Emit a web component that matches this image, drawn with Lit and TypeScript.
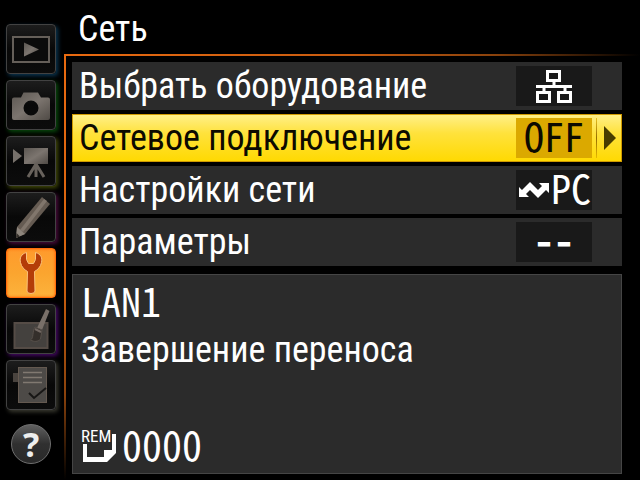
import { LitElement, html, css, svg, nothing } from "lit";
import { customElement, property, state } from "lit/decorators.js";
import { classMap } from "lit/directives/class-map.js";

const tabIcons: Record<string, unknown> = {
  play: svg`
    <rect x="7" y="13" width="36" height="25" fill="#0b0b0b" stroke="#655f59" stroke-width="2"/>
    <path d="M18 18.500L33 25.500L18 32.500Z" fill="url(#metal)"/>`,
  camera: svg`
    <path fill-rule="evenodd" fill="url(#metal)" d="M8 17.500H15L17.500 12.500H32L35 17.500H42Q44 17.500 44 19.500V38Q44 40 42 40H8Q6 40 6 38V19.500Q6 17.500 8 17.500ZM25 20.500A7.500 7.500 0 1 0 25 35.500A7.500 7.500 0 1 0 25 20.500Z"/>`,
  movie: svg`
    <path d="M7 13L16 20L7 27Z" fill="#77716b"/>
    <rect x="18" y="12" width="24" height="16" fill="url(#metal)"/>
    <path d="M30 28L22 41M30 28V41M30 28L38 41" fill="none" stroke="#68625c" stroke-width="3"/>`,
  pencil: svg`
    <path d="M36 5L44 12L19 42L10 46L11 35Z" fill="#655b52"/>
    <path d="M38 7L41 9L17 40L14 38Z" fill="#81766c"/>
    <path d="M11 35L19 42L10 46Z" fill="#8d857c"/>
    <path d="M10.500 41L14 44.500L10 46Z" fill="#35302b"/>`,
  wrench: svg`
    <path fill="#b43c08" stroke="#f9c27c" stroke-width="1" d="M20.500 4.500C15 6 13.500 10 14.500 14.500C15.500 19 18 21.500 21.500 23.500L21 43Q21 45.500 25 45.500Q29 45.500 29 43L28.500 23.500C32 21.500 34.500 19 35.500 14.500C36.500 10 35 6 29.500 4.500V11.500L27.500 15.500H22.500L20.500 11.500Z"/>`,
  retouch: svg`
    <rect x="8.500" y="19" width="33" height="25" fill="#44413e" stroke="#554c46" stroke-width="2"/>
    <path d="M40 5L43.500 7L36 26L31 24Z" fill="#797069"/>
    <path d="M29 23L36 26L34.500 35C32 38 28 38 24.500 36C28 34 26 28 29 23Z" fill="#342f2b" stroke="#57504a" stroke-width="1"/>
    <path d="M29 25L35 28" stroke="#716862" stroke-width="2"/>`,
  list: svg`
    <rect x="7" y="13" width="7" height="9" fill="#49433e"/>
    <rect x="12.500" y="7.500" width="28" height="35" fill="#4d4a47" stroke="#645950"/>
    <path d="M17 12.500H36M17 17.500H36M17 22.500H36" stroke="#817971" stroke-width="1.500"/>
    <path d="M23 33L28 38L40 28" fill="none" stroke="#171615" stroke-width="2"/>`,
};

const tabs = [
  { id: "play", label: "Просмотр" },
  { id: "camera", label: "Съемка" },
  { id: "movie", label: "Видео" },
  { id: "pencil", label: "Пользовательские настройки" },
  { id: "wrench", label: "Настройка" },
  { id: "retouch", label: "Обработка" },
  { id: "list", label: "Мое меню" },
];

@customElement("tab-bar")
class TabBar extends LitElement {
  @property() active = "wrench";

  static styles = css`
    :host {
      display: flex;
      flex-direction: column;
      align-items: center;
      gap: 6px;
      padding: 24px 2px 0 0;
    }
    button {
      padding: 0;
      cursor: pointer;
    }
    .tab {
      box-sizing: border-box;
      width: 50px;
      height: 50px;
      border: 1px solid #424242;
      border-radius: 4px;
      background: linear-gradient(#1d1d1d, #080808 50%, #0c0c0c);
      box-shadow: 2px 2px 4px var(--glow);
    }
    .tab svg {
      display: block;
      margin: -1px;
    }
    .play { --glow: #0a3550; }
    .camera { --glow: #084a0b; }
    .movie { --glow: #424a08; }
    .pencil { --glow: #4a0b3b; }
    .wrench { --glow: #4a1b00; }
    .retouch { --glow: #460865; }
    .list { --glow: #3a3a30; }
    .active {
      border-color: #ff6c0c;
      background: linear-gradient(#ff9a2c, #fba52f 50%, #fcb23c);
      box-shadow: inset 0 0 3px #ff6500;
    }
    .help {
      width: 40px;
      height: 40px;
      margin-top: 8px;
      border: 1px solid #707070;
      border-radius: 50%;
      background: linear-gradient(#606060, #303030 50%, #292929);
      color: #eee;
      font: 700 34px/36px "Noto Sans", sans-serif;
    }
  `;

  render() {
    return html`
      ${tabs.map(
        (t) => html`<button
          class=${classMap({ tab: true, [t.id]: true, active: t.id === this.active })}
          aria-label=${t.label}
        >
          <svg width="50" height="50" viewBox="0 0 50 50" aria-hidden="true">
            <defs>
              <linearGradient id="metal" x1="0" y1="0" x2="1" y2="1">
                <stop offset="0" stop-color="#5b5651" />
                <stop offset="0.5" stop-color="#7c756f" />
                <stop offset="1" stop-color="#4f4a45" />
              </linearGradient>
            </defs>
            ${tabIcons[t.id]}
          </svg>
        </button>`
      )}
      <button class="help">?</button>
    `;
  }
}

const lanIcon = html`<svg width="76" height="40" viewBox="0 0 76 40" aria-hidden="true">
  <g fill="none" stroke="#fff" stroke-width="3">
    <rect x="31.500" y="5.500" width="12" height="9" />
    <rect x="21.500" y="26.500" width="12" height="9" />
    <rect x="42.500" y="26.500" width="12" height="9" />
    <path d="M38 15V20M20 20.500H56M28 21V26M49 21V26" />
  </g>
</svg>`;

const transferIcon = html`<svg width="34" height="40" viewBox="0 0 34 40" aria-hidden="true">
  <path fill="#fff" d="M2 17L5 20L13 12L21 20L25 16L22 13H32V23L29 20L21 28L13 20L9 24L12 27H2Z" />
</svg>`;

interface Item {
  label: string;
  icon?: unknown;
  value?: string;
  unset?: boolean;
}

const items: Item[] = [
  { label: "Выбрать оборудование", icon: lanIcon },
  { label: "Сетевое подключение", value: "OFF" },
  { label: "Настройки сети", icon: transferIcon, value: "PC" },
  { label: "Параметры", value: "--", unset: true },
];

@customElement("app-root")
class AppRoot extends LitElement {
  @state() private selected = 1;

  static styles = css`
    :host {
      display: grid;
      grid-template-columns: 64px 1fr;
      min-height: 100vh;
      background: #000;
      color: #fff;
      font: 36px/48px "Roboto Condensed", "Liberation Sans", sans-serif;
    }
    main {
      display: flex;
      flex-direction: column;
      min-width: 0;
    }
    h1 {
      margin: 0;
      padding: 5px 0 1px 14px;
      font: inherit;
    }
    .panel {
      flex: 1;
      display: flex;
      flex-direction: column;
      gap: 8px;
      padding: 8px 18px 6px 8px;
      background:
        linear-gradient(to right, #e96a10, #c85c10 50%, #8a420c 75%, #000) top / 100% 2px no-repeat,
        linear-gradient(#e96a10, #d5640f 50%, #8a420c 80%, #000) left / 2px 100% no-repeat;
    }
    .menu {
      display: flex;
      flex-direction: column;
      gap: 4px;
    }
    .row {
      display: flex;
      align-items: center;
      width: 100%;
      height: 48px;
      padding: 0 6px 0 7px;
      border: 0;
      background: #2b2b2b;
      color: inherit;
      font: inherit;
      text-align: left;
      white-space: nowrap;
      cursor: pointer;
    }
    .label {
      flex: 1;
    }
    .value {
      display: flex;
      justify-content: center;
      width: 76px;
      height: 40px;
      background: #191919;
      line-height: 34px;
    }
    .mono {
      font-family: "Noto Sans Mono CJK SC", "Liberation Mono", monospace;
      font-size: 40px;
    }
    .unset {
      font-weight: 700;
    }
    .more {
      display: flex;
      align-items: center;
      justify-content: flex-end;
      width: 20px;
      height: 40px;
      margin-left: 4px;
    }
    .selected {
      background: linear-gradient(#fff08c, #ffe23c 40%, #ffd900);
      box-shadow: inset 0 0 0 1px #d09a00;
      color: #0c0a00;
    }
    .selected .value {
      background: #dba900;
    }
    .selected .more {
      background: linear-gradient(#e8c020, #946c00 50%, #e8b800) left / 1px 100% no-repeat;
    }
    .info {
      flex: 1;
      display: flex;
      flex-direction: column;
      gap: 2px;
      box-sizing: border-box;
      padding: 1px 8px 5px;
      border: 1px solid #454545;
      background: #2b2b2b;
    }
    p {
      margin: 0;
    }
    .remaining {
      display: flex;
      align-items: center;
      margin-top: auto;
      gap: 4px;
    }
    .rem {
      font: 400 17px "Roboto Condensed", sans-serif;
    }
  `;

  render() {
    return html`
      <tab-bar></tab-bar>
      <main>
        <h1>Сеть</h1>
        <section class="panel">
          <nav class="menu">
            ${items.map(
              (item, i) => html`<button
                class=${classMap({ row: true, selected: i === this.selected })}
                @click=${() => (this.selected = i)}
              >
                <span class="label">${item.label}</span>
                <span class="value">${item.icon ?? nothing}${item.value
                    ? html`<span class=${classMap({ mono: true, unset: !!item.unset })}>${item.value}</span>`
                    : nothing}</span>
                <span class="more">${i === this.selected
                    ? html`<svg width="14" height="26" viewBox="0 0 14 26" aria-hidden="true">
                        <path d="M2 1L14 13L2 25Z" fill="#483c00" />
                      </svg>`
                    : nothing}</span>
              </button>`
            )}
          </nav>
          <section class="info">
            <p class="mono">LAN1</p>
            <p>Завершение переноса</p>
            <p class="remaining">
              <svg width="37" height="48" viewBox="81 420 37 48">
                <text class="rem" x="81" y="442" fill="#fff">REM</text>
                <path fill="#fff" d="M83 444H87V457H104V450H112V434H116V453L107 462H83Z" />
              </svg>
              <span class="mono">0000</span>
            </p>
          </section>
        </section>
      </main>
    `;
  }
}
